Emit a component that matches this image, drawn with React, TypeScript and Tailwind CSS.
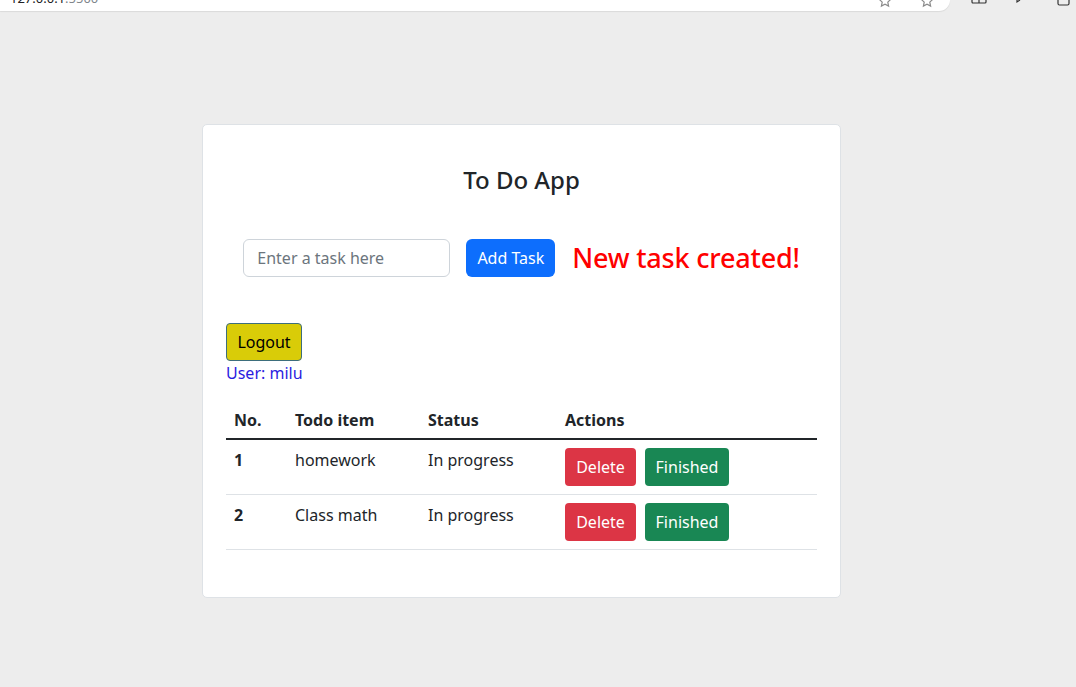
import React from "react";

const rows = [
  { no: 1, item: "homework", status: "In progress" },
  { no: 2, item: "Class math", status: "In progress" },
];

export default function App() {
  return (
    <div
      className="relative h-[687px] w-full overflow-hidden bg-[#ededed] text-[#212529]"
      style={{ fontFamily: '"Noto Sans", "Open Sans", sans-serif' }}
    >
      {/* cropped browser chrome */}
      <div className="flex h-[12px] items-start">
        <div className="relative h-[11px] w-[950px] overflow-hidden rounded-br-[12px] bg-white shadow-[0_1px_1px_rgba(0,0,0,0.08)]">
          <span className="absolute left-[10px] top-[-10px] text-[13px] leading-[16px] text-[#202124]">
            127.0.0.1<span className="text-[#80868b]">:5500</span>
          </span>
          <svg className="absolute left-[878px] top-[-6px]" width="14" height="14" viewBox="0 0 14 14" fill="none" stroke="#8a8a8a" strokeWidth="1.2">
            <path d="M7 1l1.8 3.8 4 .5-3 2.8.8 4L7 10.2 3.4 12.1l.8-4-3-2.8 4-.5z" />
          </svg>
          <svg className="absolute left-[920px] top-[-6px]" width="14" height="14" viewBox="0 0 14 14" fill="none" stroke="#8a8a8a" strokeWidth="1.2">
            <path d="M7 1l1.8 3.8 4 .5-3 2.8.8 4L7 10.2 3.4 12.1l.8-4-3-2.8 4-.5z" />
          </svg>
        </div>
        <svg className="ml-[21px] mt-[-4px]" width="16" height="12" viewBox="0 0 16 12" fill="none" stroke="#333" strokeWidth="1.2">
          <rect x="1" y="0" width="14" height="7" rx="1" />
          <path d="M8 0v7" />
        </svg>
        <svg className="ml-[28px] mt-[-4px]" width="12" height="12" viewBox="0 0 12 12" fill="none" stroke="#333" strokeWidth="1.2">
          <path d="M2 0v6l3-2" />
        </svg>
        <svg className="ml-[30px] mt-[-4px]" width="14" height="14" viewBox="0 0 14 14" fill="none" stroke="#333" strokeWidth="1.2">
          <rect x="1" y="0" width="11" height="9" rx="1.5" />
        </svg>
      </div>

      {/* card */}
      <div className="ml-[202px] mt-[112px] h-[474px] w-[639px] rounded-[5px] border border-[#dee2e6] bg-white px-[23px] pt-[40px]">
        <h4 className="text-center text-[24px] font-medium leading-[29px]">To Do App</h4>

        <div className="mt-[45px] flex h-[38px] items-center justify-center">
          <div className="flex h-[38px] w-[207px] shrink-0 items-center rounded-[6px] border border-[#ced4da] px-[13px] text-[16px] text-[#6c757d]">
            Enter a task here
          </div>
          <button className="ml-[16px] h-[38px] w-[89px] shrink-0 rounded-[6px] bg-[#0d6efd] text-[16px] text-white">
            Add Task
          </button>
          <span className="ml-[17px] whitespace-nowrap text-[27px] font-medium leading-[38px] tracking-[-0.2px] text-[#ff0000]">
            New task created!
          </span>
        </div>

        <div className="mt-[46px]">
          <button className="h-[38px] w-[76px] rounded-[4px] border border-[#3d6e7c] bg-[#d9cc08] text-[16px] text-black">
            Logout
          </button>
          <div className="text-[16px] leading-[24px] text-[#2a1de0]">User: milu</div>
        </div>

        <div className="mt-[15px] w-[591px] text-[16px] leading-[24px]">
          <div className="grid grid-cols-[61px_133px_137px_260px] border-b-2 border-[#212529] font-bold">
            <div className="px-[8px] pt-[8px] pb-[6px]">No.</div>
            <div className="px-[8px] pt-[8px] pb-[6px]">Todo item</div>
            <div className="px-[8px] pt-[8px] pb-[6px]">Status</div>
            <div className="px-[8px] pt-[8px] pb-[6px]">Actions</div>
          </div>
          {rows.map((r) => (
            <div key={r.no} className="grid grid-cols-[61px_133px_137px_260px] border-b border-[#dee2e6]">
              <div className="p-[8px] font-bold">{r.no}</div>
              <div className="p-[8px]">{r.item}</div>
              <div className="p-[8px]">{r.status}</div>
              <div className="flex gap-[9px] p-[8px]">
                <button className="h-[38px] w-[71px] rounded-[4px] bg-[#dc3545] text-[16px] text-white">Delete</button>
                <button className="h-[38px] w-[84px] rounded-[4px] bg-[#198754] text-[16px] text-white">Finished</button>
              </div>
            </div>
          ))}
        </div>
      </div>
    </div>
  );
}
